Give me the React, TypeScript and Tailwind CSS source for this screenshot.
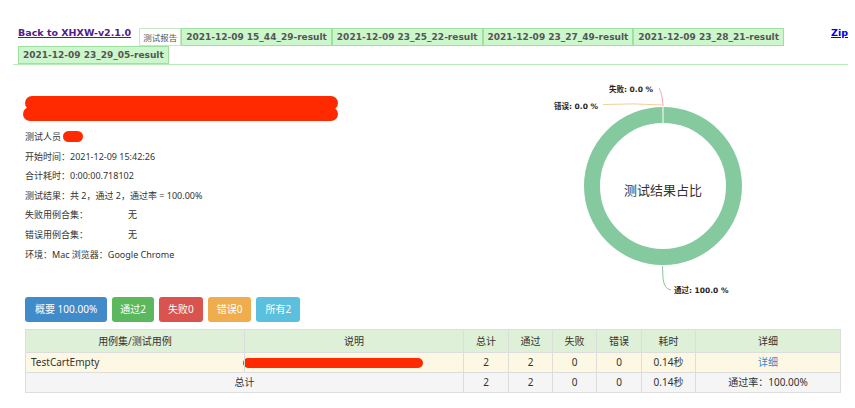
import React from "react";

const tabs = [
  "2021-12-09 15_44_29-result",
  "2021-12-09 23_25_22-result",
  "2021-12-09 23_27_49-result",
  "2021-12-09 23_28_21-result",
  "2021-12-09 23_29_05-result",
];

const info = [
  { label: "开始时间：2021-12-09 15:42:26" },
  { label: "合计耗时：0:00:00.718102" },
  { label: "测试结果：共 2，通过 2，通过率 = 100.00%" },
];

function Donut() {
  return (
    <svg width="300" height="218" viewBox="0 0 300 218" className="shrink-0">
      <circle cx="150" cy="108" r="71" fill="none" stroke="#85c99e" strokeWidth="16" />
      <line x1="150" y1="28" x2="150" y2="45" stroke="#ffffff" strokeWidth="1" />
      {/* 失败 */}
      <path d="M146 10 Q149.5 16 150 28" fill="none" stroke="#f3a3b4" strokeWidth="1" />
      <text x="96" y="14" fontSize="7.5" fontWeight="bold" fill="#222" fontFamily="'DejaVu Sans','Noto Sans CJK SC',sans-serif">
        失败: 0.0 %
      </text>
      {/* 错误 */}
      <path d="M90 26.5 Q120 25 150 27" fill="none" stroke="#f7cf95" strokeWidth="1" />
      <text x="41" y="31" fontSize="7.5" fontWeight="bold" fill="#222" fontFamily="'DejaVu Sans','Noto Sans CJK SC',sans-serif">
        错误: 0.0 %
      </text>
      {/* 通过 */}
      <path d="M149.5 188 L150 200 Q151 211 158 212" fill="none" stroke="#85c99e" strokeWidth="1" />
      <text x="161" y="215" fontSize="7.5" fontWeight="bold" fill="#222" fontFamily="'DejaVu Sans','Noto Sans CJK SC',sans-serif">
        通过: 100.0 %
      </text>
      <text x="150" y="117" fontSize="13" textAnchor="middle" fill="#333" fontFamily="'Noto Sans CJK SC',sans-serif">
        测试结果占比
      </text>
    </svg>
  );
}

export default function App() {
  return (
    <main className="w-[855px] h-[408px] overflow-hidden bg-white text-[#333] font-['Noto_Sans','Noto_Sans_CJK_SC',sans-serif]">
      {/* Top nav */}
      <div className="ml-[13px] w-[835px] pt-[28px] border-b border-[#b5edb5] flex items-start">
        <div className="flex flex-wrap flex-1 items-start pl-[5px]">
          <a href="#" className="-mt-[1px] mr-[8px] leading-[12px] text-[9.5px] font-bold underline text-[#551a8b] font-['DejaVu_Sans',sans-serif]">
            Back to XHXW-v2.1.0
          </a>
          <div className="h-[18px] px-[3px] border border-[#c5e8c5] bg-white text-[8.5px] leading-[16px] text-[#555] font-['Noto_Sans_CJK_SC',sans-serif]">
            测试报告
          </div>
          {tabs.map((t) => (
            <div
              key={t}
              className="h-[18px] px-[4px] border border-[#9fdf9f] bg-[#ccf7cc] text-[9px] leading-[16px] font-bold text-[#555] font-['DejaVu_Sans',sans-serif]"
            >
              {t}
            </div>
          ))}
        </div>
        <a href="#" className="-mt-[1px] leading-[12px] text-[9.5px] font-bold underline text-[#0000ee] font-['DejaVu_Sans',sans-serif]">
          Zip
        </a>
      </div>

      <div className="px-[25px]">
        {/* Heading + chart */}
        <div className="mt-[13px] flex">
          <div className="w-[488px] pt-[18px]">
            <div className="h-[31px]">
              <div className="h-[14px] w-[313px] rounded-full bg-[#ff2a00]" />
              <div className="-mt-[3px] -ml-[2px] h-[14px] w-[315px] rounded-full bg-[#ff2a00]" />
            </div>
            <div className="text-[9px] leading-[19.6px]">
              <p className="flex items-center">
                测试人员
                <span className="ml-[2px] inline-block h-[11px] w-[20px] rounded-full bg-[#ff2a00]" />
              </p>
              {info.map((i) => (
                <p key={i.label}>{i.label}</p>
              ))}
              <p>
                <span className="inline-block w-[103px]">失败用例合集：</span>无
              </p>
              <p>
                <span className="inline-block w-[103px]">错误用例合集：</span>无
              </p>
              <p>环境：Mac 浏览器：Google Chrome</p>
            </div>
          </div>
          <Donut />
        </div>

        {/* Filter buttons */}
        <div className="mt-[1px] flex gap-[5px] text-[10px] text-white">
          <button className="h-[25px] px-[10px] rounded-[3px] bg-[#428bca]">概要 100.00%</button>
          <button className="h-[25px] px-[8px] rounded-[3px] bg-[#5cb85c]">通过2</button>
          <button className="h-[25px] px-[9px] rounded-[3px] bg-[#d9534f]">失败0</button>
          <button className="h-[25px] px-[9px] rounded-[3px] bg-[#f0ad4e]">错误0</button>
          <button className="h-[25px] px-[9px] rounded-[3px] bg-[#5bc0de]">所有2</button>
        </div>

        {/* Results table */}
        <table className="mt-[7px] w-[815px] table-fixed border-collapse text-[10px] text-[#333]">
          <colgroup>
            <col className="w-[219px]" />
            <col className="w-[219px]" />
            <col className="w-[45px]" />
            <col className="w-[44px]" />
            <col className="w-[44px]" />
            <col className="w-[45px]" />
            <col className="w-[54px]" />
            <col className="w-[145px]" />
          </colgroup>
          <thead>
            <tr className="h-[23px] bg-[#dff0d8]">
              {["用例集/测试用例", "说明", "总计", "通过", "失败", "错误", "耗时", "详细"].map((h) => (
                <th key={h} className="border border-[#ddd] font-normal text-center">
                  {h}
                </th>
              ))}
            </tr>
          </thead>
          <tbody>
            <tr className="h-[20px] bg-[#fcf8e3]">
              <td className="border border-[#ddd] pl-[5px]">TestCartEmpty</td>
              <td className="border border-[#ddd]">
                <div className="-ml-[2px] h-[10px] w-[180px] rounded-full bg-[#ff2a00]" />
              </td>
              <td className="border border-[#ddd] text-center">2</td>
              <td className="border border-[#ddd] text-center">2</td>
              <td className="border border-[#ddd] text-center">0</td>
              <td className="border border-[#ddd] text-center">0</td>
              <td className="border border-[#ddd] text-center">0.14秒</td>
              <td className="border border-[#ddd] text-center">
                <a href="#" className="text-[#3a87c8]">详细</a>
              </td>
            </tr>
            <tr className="h-[20px] bg-[#f5f5f5]">
              <td colSpan={2} className="border border-[#ddd] text-center">总计</td>
              <td className="border border-[#ddd] text-center">2</td>
              <td className="border border-[#ddd] text-center">2</td>
              <td className="border border-[#ddd] text-center">0</td>
              <td className="border border-[#ddd] text-center">0</td>
              <td className="border border-[#ddd] text-center">0.14秒</td>
              <td className="border border-[#ddd] text-center">通过率：100.00%</td>
            </tr>
          </tbody>
        </table>
      </div>
    </main>
  );
}
